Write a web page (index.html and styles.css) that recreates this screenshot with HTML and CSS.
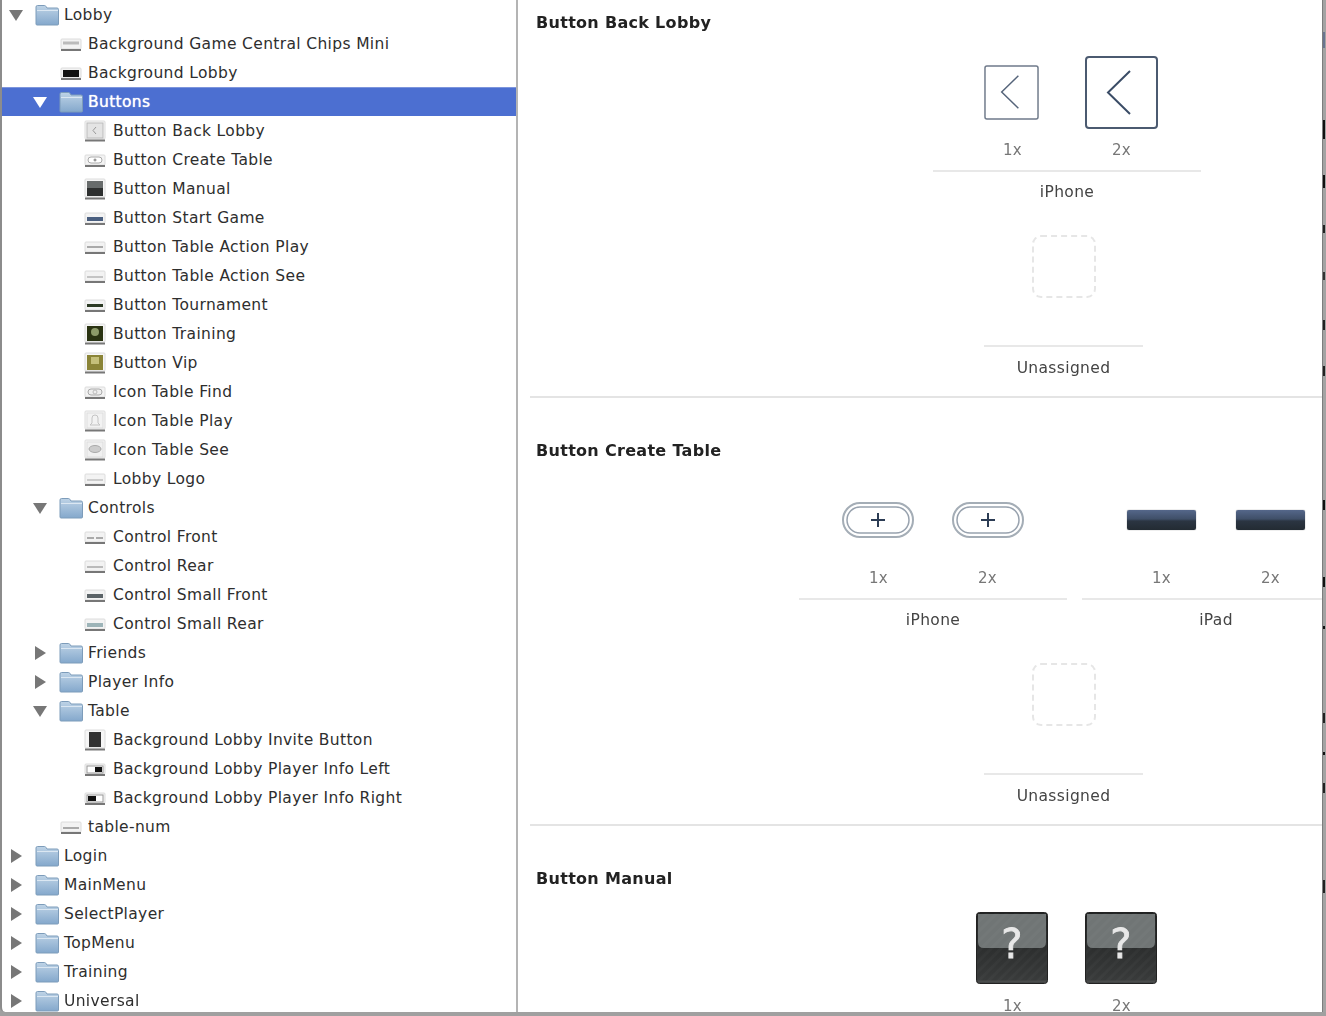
FILE: index.html

```html
<!DOCTYPE html>
<html lang="en">
<head>
    <meta charset="UTF-8">
    <meta name="viewport" content="width=device-width, initial-scale=1.0">
    <title>Asset Catalog</title>
    <link rel="stylesheet" href="styles.css">
</head>
<body>
    <svg class="defs" width="0" height="0">
        <defs>
            <linearGradient id="folderFill" x1="0" y1="0" x2="0" y2="1">
                <stop offset="0" stop-color="#bed3e6"/>
                <stop offset="1" stop-color="#84a8cc"/>
            </linearGradient>
            <linearGradient id="manualFill" x1="0" y1="0" x2="0" y2="1">
                <stop offset="0" stop-color="#1f2121"/>
                <stop offset="1" stop-color="#3a3c3c"/>
            </linearGradient>
            <pattern id="stripes" width="7" height="7" patternUnits="userSpaceOnUse" patternTransform="rotate(45)">
                <rect width="3" height="7" fill="#fff" opacity=".025"/>
            </pattern>
            <symbol id="folder" viewBox="0 0 25 22">
                <path d="M1 5V3q0-1.500 1.500-1.500h7q1 0 1.500 1l1 1.500h10q1.500 0 1.500 1.500V20q0 1-1 1H2q-1 0-1-1z" fill="url(#folderFill)" stroke="#7d9cba"/>
                <path d="M2 6.500h21" stroke="#dbe7f2"/>
            </symbol>
            <symbol id="open" viewBox="0 0 14 12"><path d="M0 1h14L7 12z" fill="#777"/></symbol>
            <symbol id="closed" viewBox="0 0 12 14"><path d="M1 0l11 7L1 14z" fill="#777"/></symbol>
            <symbol id="wide" viewBox="0 0 22 22">
                <rect x="1" y="6" width="20" height="10" rx="1" fill="#f3f3f3" stroke="#dcdcdc"/>
                <path d="M1 17h20" stroke="#777" stroke-width="2"/>
            </symbol>
            <symbol id="square" viewBox="0 0 22 22">
                <rect x="1" y="1" width="20" height="18" rx="1" fill="#f6f6f6" stroke="#dcdcdc"/>
                <path d="M1 20.500h20" stroke="#777" stroke-width="2"/>
            </symbol>
        </defs>
    </svg>

    <div class="window">
        <div class="tree">
            <div class="row"><svg class="arrow down top"><use href="#open"/></svg><svg class="folder"><use href="#folder"/></svg><span>Lobby</span></div>
            <div class="row depth1"><svg class="thumb"><use href="#wide"/><path d="M3 10h16" stroke="#bbb" stroke-width="3"/></svg><span>Background Game Central Chips Mini</span></div>
            <div class="row depth1"><svg class="thumb"><use href="#wide"/><rect x="3" y="8" width="16" height="7" fill="#111"/></svg><span>Background Lobby</span></div>
            <div class="row selected"><svg class="arrow down"><use href="#open"/></svg><svg class="folder"><use href="#folder"/></svg><span>Buttons</span></div>
            <div class="row depth2"><svg class="thumb"><use href="#square"/><rect x="3" y="3" width="16" height="15" fill="#e4e4e4" stroke="#bbb"/><path d="M12 7l-3 3.500 3 3.500" fill="none" stroke="#999"/></svg><span>Button Back Lobby</span></div>
            <div class="row depth2"><svg class="thumb"><use href="#wide"/><rect x="4" y="8" width="14" height="6" rx="3" fill="#fff" stroke="#aaa"/><path d="M9.500 11h3M11 9.500v3" stroke="#777"/></svg><span>Button Create Table</span></div>
            <div class="row depth2"><svg class="thumb"><use href="#square"/><rect x="3" y="3" width="16" height="15" fill="#2e3030"/><rect x="3" y="3" width="16" height="7" fill="#686c6c"/></svg><span>Button Manual</span></div>
            <div class="row depth2"><svg class="thumb"><use href="#wide"/><rect x="3" y="10" width="16" height="4" fill="#4a5f80"/></svg><span>Button Start Game</span></div>
            <div class="row depth2"><svg class="thumb"><use href="#wide"/><path d="M3 11h16" stroke="#aaa" stroke-width="2"/></svg><span>Button Table Action Play</span></div>
            <div class="row depth2"><svg class="thumb"><use href="#wide"/><path d="M3 12h16" stroke="#c4c4c4" stroke-width="2"/></svg><span>Button Table Action See</span></div>
            <div class="row depth2"><svg class="thumb"><use href="#wide"/><rect x="3" y="10" width="16" height="3" fill="#2c3a24"/></svg><span>Button Tournament</span></div>
            <div class="row depth2"><svg class="thumb"><use href="#square"/><rect x="3" y="3" width="16" height="15" fill="#2a3312"/><circle cx="11" cy="9" r="4" fill="#8c9a68"/></svg><span>Button Training</span></div>
            <div class="row depth2"><svg class="thumb"><use href="#square"/><rect x="3" y="3" width="16" height="15" fill="#8a8437"/><rect x="7" y="5" width="8" height="7" fill="#c4bf7a"/></svg><span>Button Vip</span></div>
            <div class="row depth2"><svg class="thumb"><use href="#wide"/><rect x="4" y="8" width="14" height="6" rx="3" fill="#eee" stroke="#aaa"/><circle cx="11" cy="11" r="2" fill="none" stroke="#bbb"/></svg><span>Icon Table Find</span></div>
            <div class="row depth2"><svg class="thumb"><use href="#square"/><rect x="3" y="3" width="16" height="15" fill="#f2f2f2" stroke="#ddd"/><path d="M6 15l2-2V8q0-3 3-3t3 3v5l2 2z" fill="none" stroke="#c4c4c4"/></svg><span>Icon Table Play</span></div>
            <div class="row depth2"><svg class="thumb"><use href="#square"/><rect x="3" y="3" width="16" height="15" fill="#f0f0f0" stroke="#ddd"/><ellipse cx="11" cy="10" rx="6" ry="3.500" fill="#ccc" stroke="#aaa"/></svg><span>Icon Table See</span></div>
            <div class="row depth2"><svg class="thumb"><use href="#wide"/><path d="M3 12h16" stroke="#ccc" stroke-width="2"/></svg><span>Lobby Logo</span></div>
            <div class="row"><svg class="arrow down"><use href="#open"/></svg><svg class="folder"><use href="#folder"/></svg><span>Controls</span></div>
            <div class="row depth2"><svg class="thumb"><use href="#wide"/><path d="M3 12h7M12 12h7" stroke="#aaa" stroke-width="2"/></svg><span>Control Front</span></div>
            <div class="row depth2"><svg class="thumb"><use href="#wide"/><path d="M3 12h16" stroke="#bbb" stroke-width="2"/></svg><span>Control Rear</span></div>
            <div class="row depth2"><svg class="thumb"><use href="#wide"/><rect x="3" y="10" width="16" height="4" fill="#5c6468"/></svg><span>Control Small Front</span></div>
            <div class="row depth2"><svg class="thumb"><use href="#wide"/><rect x="3" y="10" width="16" height="4" fill="#9db4b8"/></svg><span>Control Small Rear</span></div>
            <div class="row"><svg class="arrow right"><use href="#closed"/></svg><svg class="folder"><use href="#folder"/></svg><span>Friends</span></div>
            <div class="row"><svg class="arrow right"><use href="#closed"/></svg><svg class="folder"><use href="#folder"/></svg><span>Player Info</span></div>
            <div class="row"><svg class="arrow down"><use href="#open"/></svg><svg class="folder"><use href="#folder"/></svg><span>Table</span></div>
            <div class="row depth2"><svg class="thumb"><use href="#square"/><rect x="5" y="3" width="12" height="15" fill="#333"/></svg><span>Background Lobby Invite Button</span></div>
            <div class="row depth2"><svg class="thumb"><use href="#wide"/><rect x="3" y="8" width="16" height="7" fill="#fff" stroke="#999"/><rect x="11" y="9" width="7" height="5" fill="#111"/></svg><span>Background Lobby Player Info Left</span></div>
            <div class="row depth2"><svg class="thumb"><use href="#wide"/><rect x="3" y="8" width="16" height="7" fill="#fff" stroke="#999"/><rect x="4" y="9" width="8" height="5" fill="#111"/></svg><span>Background Lobby Player Info Right</span></div>
            <div class="row depth1"><svg class="thumb"><use href="#wide"/><path d="M3 12h16" stroke="#aaa" stroke-width="2"/></svg><span>table-num</span></div>
            <div class="row"><svg class="arrow right top"><use href="#closed"/></svg><svg class="folder"><use href="#folder"/></svg><span>Login</span></div>
            <div class="row"><svg class="arrow right top"><use href="#closed"/></svg><svg class="folder"><use href="#folder"/></svg><span>MainMenu</span></div>
            <div class="row"><svg class="arrow right top"><use href="#closed"/></svg><svg class="folder"><use href="#folder"/></svg><span>SelectPlayer</span></div>
            <div class="row"><svg class="arrow right top"><use href="#closed"/></svg><svg class="folder"><use href="#folder"/></svg><span>TopMenu</span></div>
            <div class="row"><svg class="arrow right top"><use href="#closed"/></svg><svg class="folder"><use href="#folder"/></svg><span>Training</span></div>
            <div class="row"><svg class="arrow right top"><use href="#closed"/></svg><svg class="folder"><use href="#folder"/></svg><span>Universal</span></div>
        </div>

        <div class="detail">
            <section class="asset">
                <h3>Button Back Lobby</h3>
                <div class="groups single">
                    <div class="group">
                        <div class="slots">
                            <div class="slot">
                                <svg class="image back1" viewBox="0 0 56 56"><rect x="1" y="1" width="54" height="54" rx="2" fill="#fff" stroke="#6f7a8a" stroke-width="1.500"/><path d="M35 11L18 27.500 35 44" fill="none" stroke="#55647a" stroke-width="1.500"/></svg>
                                <span>1x</span>
                            </div>
                            <div class="slot">
                                <svg class="image back2" viewBox="0 0 73 73"><rect x="1" y="1" width="71" height="71" rx="3" fill="#fff" stroke="#4b5a70" stroke-width="2"/><path d="M45 15L23 36.500 45 58" fill="none" stroke="#3a4c66" stroke-width="2"/></svg>
                                <span>2x</span>
                            </div>
                        </div>
                        <div class="group-name">iPhone</div>
                    </div>
                </div>
                <div class="unassigned">
                    <div class="dashed"></div>
                    <div class="group-name">Unassigned</div>
                </div>
            </section>

            <section class="asset">
                <h3>Button Create Table</h3>
                <div class="groups">
                    <div class="group">
                        <div class="slots">
                            <div class="slot">
                                <svg class="image pill" viewBox="0 0 72 36"><rect x="1" y="1" width="70" height="34" rx="17" fill="#fff" stroke="#a4adb6" stroke-width="2"/><rect x="5" y="5" width="62" height="26" rx="13" fill="#fff" stroke="#98a2ae" stroke-width="1.500"/><path d="M29 18h14M36 11v14" stroke="#2c3c54" stroke-width="2"/></svg>
                                <span>1x</span>
                            </div>
                            <div class="slot">
                                <svg class="image pill" viewBox="0 0 72 36"><rect x="1" y="1" width="70" height="34" rx="17" fill="#fff" stroke="#a4adb6" stroke-width="2"/><rect x="5" y="5" width="62" height="26" rx="13" fill="#fff" stroke="#98a2ae" stroke-width="1.500"/><path d="M29 18h14M36 11v14" stroke="#2c3c54" stroke-width="2"/></svg>
                                <span>2x</span>
                            </div>
                        </div>
                        <div class="group-name">iPhone</div>
                    </div>
                    <div class="group">
                        <div class="slots">
                            <div class="slot">
                                <div class="image bar"></div>
                                <span>1x</span>
                            </div>
                            <div class="slot">
                                <div class="image bar"></div>
                                <span>2x</span>
                            </div>
                        </div>
                        <div class="group-name">iPad</div>
                    </div>
                </div>
                <div class="unassigned">
                    <div class="dashed"></div>
                    <div class="group-name">Unassigned</div>
                </div>
            </section>

            <section class="asset">
                <h3>Button Manual</h3>
                <div class="groups single">
                    <div class="group">
                        <div class="slots">
                            <div class="slot">
                                <svg class="image manual" viewBox="0 0 72 72"><rect x=".5" y=".5" width="71" height="71" rx="3" fill="url(#manualFill)" stroke="#222"/><path d="M2 2h68v28q0 6-6 6H8q-6 0-6-6z" fill="#707575"/><rect x="1" y="1" width="70" height="70" fill="url(#stripes)"/><path d="M2 69.500h68" stroke="#4a4c4c" stroke-width="2"/><text x="36" y="46" text-anchor="middle" class="mark">?</text></svg>
                                <span>1x</span>
                            </div>
                            <div class="slot">
                                <svg class="image manual" viewBox="0 0 72 72"><rect x=".5" y=".5" width="71" height="71" rx="3" fill="url(#manualFill)" stroke="#222"/><path d="M2 2h68v28q0 6-6 6H8q-6 0-6-6z" fill="#707575"/><rect x="1" y="1" width="70" height="70" fill="url(#stripes)"/><path d="M2 69.500h68" stroke="#4a4c4c" stroke-width="2"/><text x="36" y="46" text-anchor="middle" class="mark">?</text></svg>
                                <span>2x</span>
                            </div>
                        </div>
                    </div>
                </div>
            </section>
        </div>
    </div>
    <div class="edge"></div>
</body>
</html>
```

FILE: styles.css

```css
html, body {
    margin: 0;
    height: 100%;
    overflow: hidden;
    background-color: #a0a0a0;
}
body {
    display: flex;
    align-items: flex-start;
    font-family: "DejaVu Sans", sans-serif;
    font-size: 15.5px;
    letter-spacing: .35px;
    color: #2e2e2e;
}
.defs {
    position: absolute;
}
.window {
    display: flex;
    width: 1322px;
    height: 1012px;
    flex-shrink: 0;
    box-sizing: border-box;
    border-left: 2px solid #8c8c8c;
    border-bottom-left-radius: 5px;
    background-color: #fff;
    overflow: hidden;
    filter: blur(.4px);
}

/* bits of the window behind, showing at the right */
.edge {
    box-sizing: border-box;
    width: 4px;
    height: 1012px;
    flex-shrink: 0;
    border-left: 1px solid #7d7d7d;
    background-color: #a3a3a3;
    background-repeat: no-repeat;
    background-size: 2px 100%;
    background-image: linear-gradient(
        transparent 32px, #6a7590 32px, #6a7590 48px, transparent 48px,
        transparent 120px, #111 120px, #111 139px, transparent 139px,
        transparent 175px, #111 175px, #111 188px, transparent 188px,
        transparent 225px, #222 225px, #222 233px, transparent 233px,
        transparent 272px, #333 272px, #333 280px, transparent 280px,
        transparent 320px, #222 320px, #222 330px, transparent 330px,
        transparent 366px, #222 366px, #222 376px, transparent 376px,
        transparent 500px, #111 500px, #111 510px, transparent 510px,
        transparent 577px, #111 577px, #111 587px, transparent 587px,
        transparent 626px, #111 626px, #111 629px, transparent 629px,
        transparent 713px, #222 713px, #222 723px, transparent 723px,
        transparent 752px, #111 752px, #111 755px, transparent 755px,
        transparent 783px, #222 783px, #222 793px, transparent 793px,
        transparent 880px, #222 880px, #222 893px, transparent 893px
    );
}

/* left tree */
.tree {
    width: 514px;
    flex-shrink: 0;
    border-right: 2px solid #b4b4b4;
}
.row {
    display: flex;
    align-items: center;
    height: 29px;
    white-space: nowrap;
}
.row.selected {
    background-color: #4c6fd1;
    box-shadow: inset 0 1px #7d95dc;
    color: #fff;
    text-shadow: 0 0 1px #fff;
}
.row.depth1 {
    padding-left: 58px;
}
.row.depth1 .thumb {
    margin-right: 6px;
}
.row.depth2 {
    padding-left: 82px;
}
.arrow {
    flex-shrink: 0;
}
.arrow.down {
    width: 14px;
    height: 12px;
    margin-left: 31px;
}
.arrow.right {
    width: 12px;
    height: 14px;
    margin-left: 32px;
}
.arrow.down.top {
    margin-left: 7px;
}
.arrow.right.top {
    margin-left: 8px;
}
.selected .arrow use {
    filter: brightness(10);
}
.folder {
    width: 25px;
    height: 22px;
    flex-shrink: 0;
    margin-left: 12px;
    margin-right: 4px;
}
.arrow.right + .folder {
    margin-left: 13px;
}
.thumb {
    width: 22px;
    height: 22px;
    flex-shrink: 0;
    margin-right: 7px;
}

/* right side */
.detail {
    flex: 1;
    min-width: 0;
    margin-left: 12px;
    margin-top: -30px;
    overflow: hidden;
}
.asset {
    height: 428px;
    box-sizing: border-box;
    padding-top: 43px;
    border-bottom: 2px solid #e4e4e4;
}
.asset h3 {
    margin: 0 0 22px 6px;
    height: 20px;
    line-height: 20px;
    font-size: 16px;
    letter-spacing: .3px;
    color: #222;
}
.groups {
    display: flex;
    gap: 15px;
    margin-left: 269px;
}
.groups.single {
    margin-left: 403px;
}
.group {
    width: 268px;
    flex-shrink: 0;
}
.slots {
    display: flex;
    height: 115px;
    padding: 0 25px;
}
.slot {
    width: 109px;
    box-sizing: border-box;
    height: 115px;
    padding-bottom: 10px;
    display: flex;
    flex-direction: column;
    align-items: center;
    justify-content: flex-end;
    color: #777;
    font-size: 15px;
}
.slot span {
    height: 20px;
    line-height: 20px;
    margin-top: 11px;
}
.image {
    display: block;
    flex-shrink: 0;
    margin: auto 0;
}
.back1 {
    width: 55px;
    height: 55px;
    margin-left: -2px;
}
.back2 {
    width: 73px;
    height: 73px;
}
.pill {
    width: 72px;
    height: 36px;
    margin-left: -2px;
}
.slot + .slot .pill {
    margin-left: 0;
}
.bar {
    width: 69px;
    height: 20px;
    border-radius: 2px;
    background: linear-gradient(#55678a, #3f4f68 45%, #2b3542 55%, #232b33);
    box-shadow: 0 0 1px #555;
}
.manual {
    width: 72px;
    height: 72px;
    margin-left: -2px;
}
.mark {
    font-family: "DejaVu Sans", sans-serif;
    font-size: 40px;
    fill: #e8e8e8;
    stroke: #e8e8e8;
    stroke-width: .8px;
}
.group-name {
    border-top: 2px solid #e8e8e8;
    height: 20px;
    line-height: 20px;
    padding-top: 10px;
    text-align: center;
    color: #444;
}
.unassigned {
    width: 159px;
    margin: 33px 0 0 454px;
}
.unassigned .group-name {
    padding-top: 11px;
}
.dashed {
    box-sizing: border-box;
    width: 64px;
    height: 63px;
    margin: 0 auto 47px;
    border: 2px dashed #e6e6e6;
    border-radius: 9px;
}
```
